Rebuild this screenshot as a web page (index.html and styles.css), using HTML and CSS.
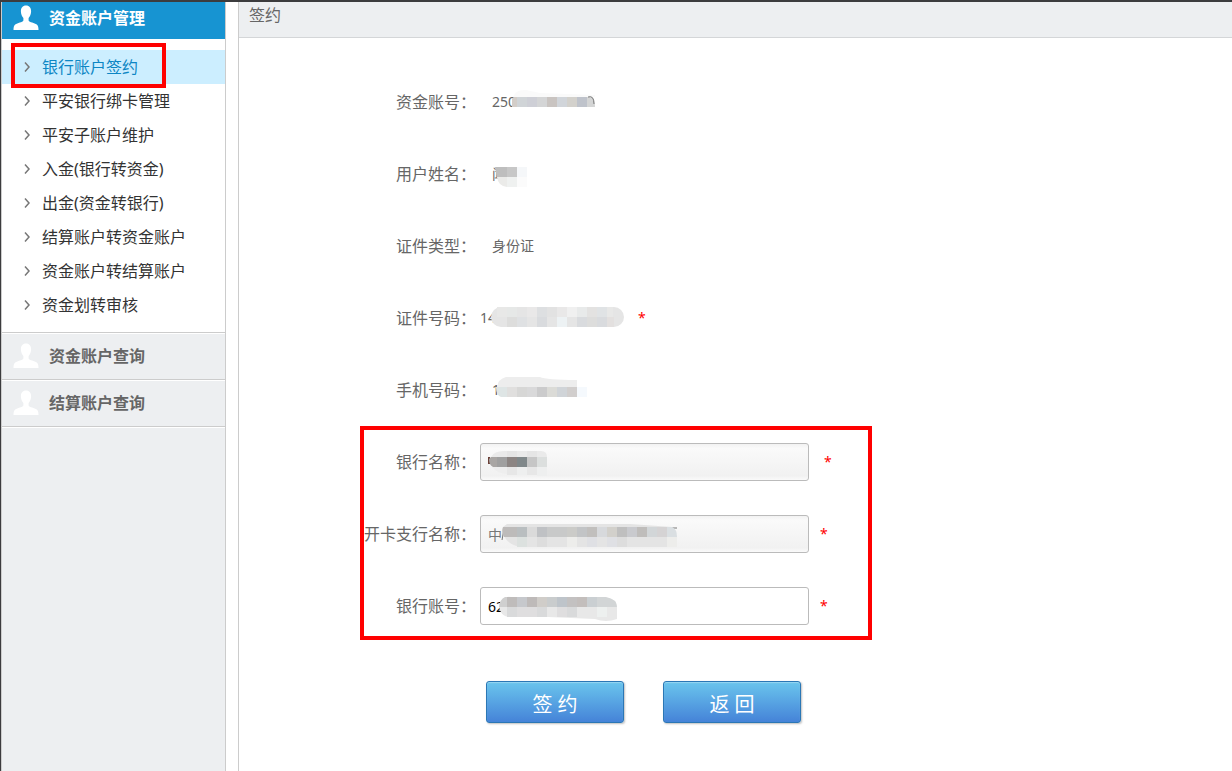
FILE: index.html
```html
<!DOCTYPE html>
<html lang="zh-CN">
<head>
    <meta charset="UTF-8">
    <meta name="viewport" content="width=device-width, initial-scale=1.0">
    <title>签约</title>
    <link rel="stylesheet" href="styles.css">
</head>
<body>

    <svg class="defs" width="0" height="0">
        <symbol id="user" viewBox="0 0 26 26">
            <path d="M13 0.500C9.600 0.500 7.800 3 7.900 6.500C8 9.500 9 11.500 10.400 13V15.500C9.500 17.500 4.500 17.800 2.200 19.600C0.800 20.800 0.500 22.800 0.500 25H25.500C25.500 22.800 25.200 20.800 23.800 19.600C21.500 17.800 16.500 17.500 15.600 15.500V13C17 11.500 18 9.500 18.100 6.500C18.200 3 16.400 0.500 13 0.500Z"/>
        </symbol>
        <symbol id="arrow" viewBox="0 0 6 10">
            <path d="M1 0.500L5 5L1 9.500" fill="none" stroke="#777" stroke-width="1.500"/>
        </symbol>
    </svg>

    <aside class="sidebar">
        <a href="#" class="section active"><svg class="user"><use href="#user"/></svg>资金账户管理</a>
        <nav class="menu">
            <a href="#" class="item current"><svg class="arrow"><use href="#arrow"/></svg>银行账户签约<span class="mark"></span></a>
            <a href="#" class="item"><svg class="arrow"><use href="#arrow"/></svg>平安银行绑卡管理</a>
            <a href="#" class="item"><svg class="arrow"><use href="#arrow"/></svg>平安子账户维护</a>
            <a href="#" class="item"><svg class="arrow"><use href="#arrow"/></svg>入金(银行转资金)</a>
            <a href="#" class="item"><svg class="arrow"><use href="#arrow"/></svg>出金(资金转银行)</a>
            <a href="#" class="item"><svg class="arrow"><use href="#arrow"/></svg>结算账户转资金账户</a>
            <a href="#" class="item"><svg class="arrow"><use href="#arrow"/></svg>资金账户转结算账户</a>
            <a href="#" class="item"><svg class="arrow"><use href="#arrow"/></svg>资金划转审核</a>
        </nav>
        <a href="#" class="section"><svg class="user"><use href="#user"/></svg>资金账户查询</a>
        <a href="#" class="section"><svg class="user"><use href="#user"/></svg>结算账户查询</a>
        <div class="rest"></div>
    </aside>

    <main class="main">
        <h1 class="title">签约</h1>

        <form class="form">
            <div class="row">
                <span class="label">资金账号：</span>
                <div class="control">
                    <span class="value">250</span>
                    <svg class="mosaic" viewBox="0 0 329 38">
                        <path d="M33 14Q36 6 46 7L60 10L115 12V14Z" fill="#fafafa"/>
                        <path d="M32 24V16L34 14H37V24Z" fill="#d3cdc8"/>
                        <path d="M37 14h10v10h-10z" fill="#d0d4d7"/>
                        <path d="M47 14h10v10h-10z" fill="#cecfd6"/>
                        <path d="M57 14h10v10h-10z" fill="#d4d5d6"/>
                        <path d="M67 14h10v10h-10z" fill="#c9c4c1"/>
                        <path d="M77 14h10v10h-10z" fill="#d1d5da"/>
                        <path d="M87 14h10v10h-10z" fill="#d3d1cc"/>
                        <path d="M97 14h10v10h-10z" fill="#bfc3cb"/>
                        <path d="M107 14h5q3 3 3 10h-8z" fill="#d4d5d5"/>
                        <path d="M108 14Q114 12 114 21" fill="none" stroke="#777" stroke-width="1"/>
                    </svg>
                </div>
            </div>
            <div class="row">
                <span class="label">用户姓名：</span>
                <div class="control">
                    <span class="value">闻</span>
                    <svg class="mosaic" viewBox="0 0 329 38">
                        <path d="M15 12h17v12h-15z" fill="#bebebe"/>
                        <path d="M27 12h10v10h-10z" fill="#c7c7c7"/>
                        <path d="M37 12h10v10h-10z" fill="#f5f7f9"/>
                        <path d="M17 22h10v10Q18 31 17 22z" fill="#ebebe9"/>
                        <path d="M27 22h10v10h-10z" fill="#eff1f0"/>
                        <path d="M37 22h10v10h-10z" fill="#fbfbfb"/>
                    </svg>
                </div>
            </div>
            <div class="row">
                <span class="label">证件类型：</span>
                <div class="control"><span class="value">身份证</span></div>
            </div>
            <div class="row">
                <span class="label">证件号码：</span>
                <div class="control compact">
                    <span class="value">14</span>
                    <svg class="mosaic" viewBox="0 0 329 38">
                        <rect x="11" y="8" width="133" height="20" rx="10" fill="#e5e5e5"/>
                        <path d="M17 8h10v10h-10zM127 8h6v10h-6z" fill="#e8e8e7"/>
                        <path d="M27 8h10v10h-10z" fill="#e6e8e7"/>
                        <path d="M47 8h10v10h-10zM77 8h10v10h-10z" fill="#e9e8e8"/>
                        <path d="M57 8h10v10h-10z" fill="#dddfe1"/>
                        <path d="M67 8h10v10h-10z" fill="#e2e2e2"/>
                        <path d="M87 8h10v10h-10z" fill="#f0f0f0"/>
                        <path d="M97 8h10v10h-10z" fill="#e8eaea"/>
                        <path d="M107 8h10v10h-10z" fill="#e3e2e1"/>
                        <path d="M117 8h10v10h-10z" fill="#e0e3e5"/>
                        <path d="M27 18h10v10h-10zM107 18h10v10h-10z" fill="#dddddc"/>
                        <path d="M37 18h10v10h-10z" fill="#dfe1e3"/>
                        <path d="M57 18h10v10h-10zM97 18h10v10h-10zM117 18h10v10h-10z" fill="#d9dbde"/>
                        <path d="M77 18h10v10h-10z" fill="#edf2f4"/>
                        <path d="M127 18h7v10h-7z" fill="#e3e0df"/>
                    </svg>
                </div>
                <span class="star under">*</span>
            </div>
            <div class="row">
                <span class="label">手机号码：</span>
                <div class="control">
                    <span class="value">1</span>
                    <svg class="mosaic" viewBox="0 0 329 38">
                        <path d="M17 16Q18 8 26 6L60 6Q66 9 97 9V16Z" fill="#ededed"/>
                        <path d="M16 16h11v10h-6Q16 24 16 16z" fill="#dee5e5"/>
                        <path d="M27 16h10v10h-10z" fill="#e0dfde"/>
                        <path d="M37 16h10v10h-10z" fill="#d7d7d6"/>
                        <path d="M47 16h10v10h-10z" fill="#d9d9da"/>
                        <path d="M57 16h10v10h-10z" fill="#cbcbcc"/>
                        <path d="M67 16h10v10h-10z" fill="#dbdbd7"/>
                        <path d="M77 16h10v10h-10z" fill="#d0d4d8"/>
                        <path d="M87 16h10v10h-10z" fill="#d1cecd"/>
                        <path d="M97 16h10v10h-10z" fill="#f5f9fd"/>
                    </svg>
                </div>
            </div>

            <div class="bank">
                <div class="row">
                    <label class="label" for="bankName">银行名称：</label>
                    <div class="control">
                        <input type="text" id="bankName" class="input locked" readonly>
                        <svg class="mosaic" viewBox="0 0 329 38">
                            <path d="M8 14h2v7h-2z" fill="#6b4038"/>
                            <path d="M11 14Q14 8 24 8H61Q67 8 67 14Z" fill="#eaeaea"/>
                            <path d="M27 8h10v6h-10zM47 8h10v6h-10z" fill="#e5e5e5"/>
                            <path d="M12 24h15v7Q18 31 12 24z" fill="#eeeeee"/>
                            <path d="M27 24h10v8h-10zM47 24h10v8h-10z" fill="#e7e7e7"/>
                            <path d="M37 24h10v8h-10zM57 24h10v9h-10z" fill="#eeefef"/>
                            <path d="M9 16l2-2h6v10h-4q-4-2-4-8z" fill="#a9a6a4"/>
                            <path d="M17 14h10v10h-10z" fill="#a0a0a0"/>
                            <path d="M27 14h10v10h-10z" fill="#8c8583"/>
                            <path d="M37 14h10v10h-10z" fill="#80888a"/>
                            <path d="M47 14h10v10h-10z" fill="#c6c6c6"/>
                            <path d="M57 14h10v10h-10z" fill="#dcdfde"/>
                        </svg>
                    </div>
                    <span class="star first">*</span>
                </div>
                <div class="row">
                    <label class="label" for="branchName">开卡支行名称：</label>
                    <div class="control">
                        <input type="text" id="branchName" class="input locked" value="中" readonly>
                        <svg class="mosaic" viewBox="0 0 329 38">
                            <path d="M24 14L22 25" fill="none" stroke="#777"/>
                            <path d="M188 13h9" stroke="#777"/>
                            <path d="M23 12L27 9H150L192 12L197 22V32H46Q27 32 23 18Z" fill="#e4e4e4"/>
                            <path d="M23 12h14v10H24Q21 17 23 12z" fill="#bdbbba"/>
                            <path d="M37 12h10v10h-10z" fill="#b9bec0"/>
                            <path d="M47 12h10v10h-10z" fill="#dadada"/>
                            <path d="M57 12h10v10h-10z" fill="#bfc1c4"/>
                            <path d="M67 12h20v10h-20z" fill="#c8c9c9"/>
                            <path d="M87 12h10v10h-10z" fill="#cbcbc8"/>
                            <path d="M97 12h10v10h-10z" fill="#c2c4c6"/>
                            <path d="M107 12h10v10h-10z" fill="#c1bfbd"/>
                            <path d="M117 12h10v10h-10z" fill="#d7d9dc"/>
                            <path d="M127 12h10v10h-10z" fill="#d2d0cb"/>
                            <path d="M137 12h10v10h-10z" fill="#bfbfbf"/>
                            <path d="M147 12h10v10h-10z" fill="#c9cace"/>
                            <path d="M157 12h10v10h-10z" fill="#bfbdbb"/>
                            <path d="M167 12h10v10h-10z" fill="#d2d6d8"/>
                            <path d="M177 12h10v10h-10z" fill="#d5d3d4"/>
                            <path d="M187 12h5q5 2 5 10h-10z" fill="#dadfe2"/>
                            <path d="M37 22h10v10h-10z" fill="#dce1df"/>
                            <path d="M57 22h10v10h-10zM137 22h10v10h-10z" fill="#dddddd"/>
                            <path d="M87 22h10v10h-10zM187 22h10v10h-10z" fill="#ededeb"/>
                            <path d="M107 22h10v10h-10zM127 22h10v10h-10z" fill="#dfe0e4"/>
                        </svg>
                    </div>
                    <span class="star">*</span>
                </div>
                <div class="row">
                    <label class="label" for="bankAccount">银行账号：</label>
                    <div class="control">
                        <input type="text" id="bankAccount" class="input" value="62">
                        <svg class="mosaic" viewBox="0 0 329 38">
                            <path d="M19 18Q22 8 32 10H118Q137 10 137 20V32Q126 36 115 32L68 30H30Q20 30 19 18Z" fill="#e8e8e8"/>
                            <path d="M19 20Q20 12 25 10H27V20Z" fill="#cfcfcf"/>
                            <path d="M27 10h10v10h-10z" fill="#bfbcbb"/>
                            <path d="M37 10h10v10h-10z" fill="#c6c8cc"/>
                            <path d="M47 10h10v10h-10z" fill="#bebab9"/>
                            <path d="M57 10h10v10h-10z" fill="#d0cdc9"/>
                            <path d="M67 10h10v10h-10z" fill="#c9cccd"/>
                            <path d="M77 10h10v10h-10z" fill="#bec4ca"/>
                            <path d="M87 10h10v10h-10z" fill="#c3c1c1"/>
                            <path d="M97 10h10v10h-10z" fill="#c3bebc"/>
                            <path d="M107 10h10v10h-10z" fill="#cacfd2"/>
                            <path d="M117 10h9q11 2 11 10h-20z" fill="#d2d5d6"/>
                            <path d="M27 20h10v10h-10zM57 20h10v10h-10zM87 20h10v10h-10z" fill="#d9dadb"/>
                            <path d="M37 20h20v10h-20zM77 20h10v10h-10z" fill="#dfdedf"/>
                            <path d="M117 20h10v10h-10z" fill="#edf0ef"/>
                        </svg>
                    </div>
                    <span class="star">*</span>
                </div>
                <div class="mark"></div>
            </div>

            <div class="buttons">
                <button type="button" class="btn">签 约</button>
                <button type="button" class="btn">返 回</button>
            </div>
        </form>
    </main>

</body>
</html>
```
FILE: styles.css
```css
* {
    box-sizing: border-box;
}

body {
    margin: 0;
    display: flex;
    gap: 12px;
    min-height: 100vh;
    border-top: 2px solid #3c3c3e;
    border-left: 1px solid #3c3c3e;
    background-color: #fff;
    color: #666;
    font-family: "Noto Sans", "Noto Sans CJK SC", sans-serif;
    font-size: 16px;
    line-height: 24px;
}

a {
    color: inherit;
    text-decoration: none;
}

.defs {
    position: absolute;
}

/* Left navigation */
.sidebar {
    flex: 0 0 225px;
    display: flex;
    flex-direction: column;
    border-left: 1px solid #ccc;
    border-right: 1px solid #ccc;
    background-color: #edeff1;
}

.section {
    display: flex;
    align-items: center;
    gap: 10px;
    height: 47px;
    padding-left: 11px;
    border-top: 1px solid #ccc;
    box-shadow: inset 0 1px 0 #fff;
    font-weight: bold;
}

.section.active {
    height: 37px;
    padding-bottom: 6px;
    border-top: 0;
    box-shadow: none;
    background-color: #1794d2;
    color: #fff;
}

.user {
    width: 26px;
    height: 26px;
    fill: #fff;
}

.menu {
    padding: 11px 0 10px;
    background-color: #fff;
    color: #333;
}

.item {
    position: relative;
    display: flex;
    align-items: center;
    gap: 12px;
    height: 34px;
    padding-left: 22px;
}

.item.current {
    background-color: #cef;
    color: #0d86c4;
}

.arrow {
    width: 6px;
    height: 10px;
}

.rest {
    flex: 1;
    border-top: 1px solid #ccc;
    box-shadow: inset 0 1px 0 #fff;
}

/* Red highlight frames */
.mark {
    position: absolute;
    border: 4px solid #f00;
    pointer-events: none;
}

.item .mark {
    top: -7px;
    left: 9px;
    width: 155px;
    height: 45px;
}

.bank .mark {
    top: -17px;
    bottom: -15px;
    left: 121px;
    width: 512px;
}

/* Content */
.main {
    flex: 1;
    min-width: 0;
    border-left: 1px solid #ccc;
}

.title {
    height: 36px;
    margin: 0;
    padding: 1px 10px;
    border-bottom: 1px solid #d4d6d8;
    background-color: #edeff1;
    font-size: 16px;
    font-weight: normal;
}

.form {
    padding: 45px 0;
}

.form,
.bank {
    display: flex;
    flex-direction: column;
    gap: 34px;
}

.bank {
    position: relative;
}

.row {
    display: flex;
    align-items: center;
    height: 38px;
}

.label {
    width: 237px;
    margin-right: 4px;
    text-align: right;
    white-space: nowrap;
}

.control {
    position: relative;
    display: flex;
    align-items: center;
    width: 329px;
    height: 38px;
}

.value {
    padding-left: 12px;
    font-size: 14px;
}

.compact {
    width: 147px;
}

.compact .value {
    padding-left: 0;
}

.mosaic {
    position: absolute;
    top: 0;
    left: 0;
    width: 329px;
    height: 38px;
    pointer-events: none;
}

.input {
    width: 100%;
    height: 38px;
    padding: 0 7px;
    border: 1px solid #bbb;
    border-radius: 3px;
    background-color: #fff;
    color: #000;
    font-family: inherit;
    font-size: 14px;
}

.input.locked {
    background: linear-gradient(#f2f2f2, #fafafa 12%, #f1f1f1 88%, #fafafa);
    color: #777;
}

.star {
    margin-left: 11px;
    color: #f00;
    font-size: 14px;
}

.star.first {
    margin-left: 15px;
}

.buttons {
    display: flex;
    gap: 39px;
    margin-top: 22px;
    padding-left: 247px;
}

.btn {
    width: 138px;
    height: 42px;
    padding: 2px 0 0;
    border: 1px solid #2b77b5;
    border-radius: 3px;
    background: linear-gradient(#6ac5ed, #4583d8);
    box-shadow: inset 0 1px 1px rgba(255, 255, 255, 0.3), 1px 1px 2px rgba(0, 0, 0, 0.25);
    color: #fff;
    font-family: inherit;
    font-size: 20px;
    cursor: pointer;
}
```
